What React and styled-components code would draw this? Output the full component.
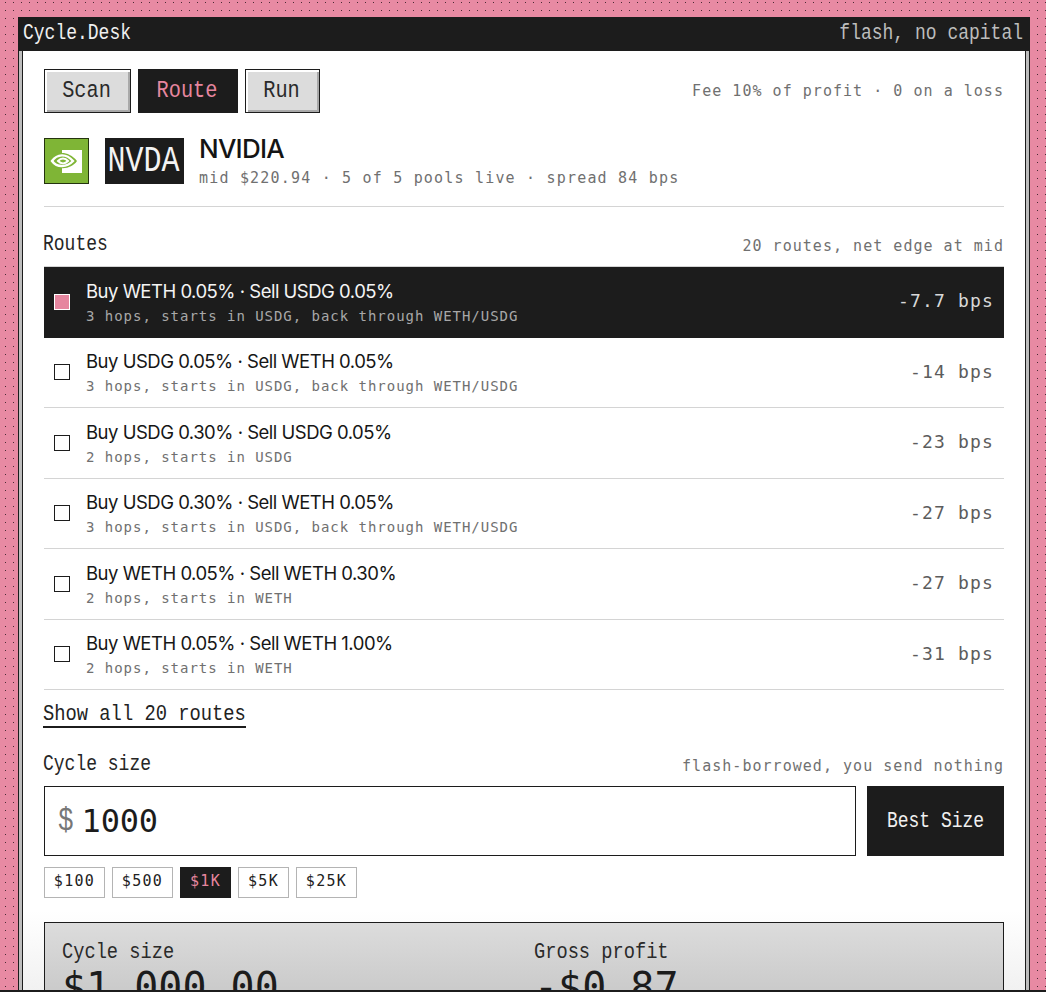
import React from "react";
import styled, { createGlobalStyle } from "styled-components";

const ink = "#1c1c1c";
const pink = "#e6869f";
const mono = '"DejaVu Sans Mono", monospace';
const pixel = '"Liberation Mono", monospace';
const sans = 'Inter, "Liberation Sans", sans-serif';

const Global = createGlobalStyle`
  html, body { margin: 0; padding: 0; height: 992px; overflow: hidden; }
  * { box-sizing: border-box; }
`;

const Page = styled.div`
  height: 992px;
  display: flex;
  flex-direction: column;
  overflow: hidden;
`;
const Stage = styled.div`
  flex: 1;
  min-height: 0;
  overflow: hidden;
  padding: 17px 16px 0 18px;
  background-color: #e88aa3;
  background-image: radial-gradient(circle at 5.5px 2.5px, #4a2a34 0.6px, transparent 1px);
  background-size: 8px 8px;
`;
const BottomEdge = styled.div`
  flex: none;
  height: 2px;
  background: ${ink};
`;
const Window = styled.div`
  height: 1000px;
  border: 1px solid ${ink};
  background: #bdbdbd;
  display: flex;
  flex-direction: column;
`;
const TitleBar = styled.div`
  flex: none;
  height: 34px;
  margin-top: -1px;
  background: ${ink};
  display: flex;
  align-items: center;
  justify-content: space-between;
  padding: 0 6px 2px 4px;
  font-family: ${pixel};
  font-size: 18px;
`;
const Tall = styled.span`
  display: inline-block;
  transform: scaleY(${(p) => p.$y || 1.22});
  transform-origin: 50% ${(p) => p.$o || 50}%;
`;
const TitleText = styled(Tall)`
  color: ${(p) => (p.$dim ? "#bdbdbd" : "#f0f0f0")};
`;
const Gutter = styled.div`
  flex: 1;
  min-height: 0;
  padding: 0 3px;
`;
const Body = styled.div`
  height: 100%;
  background: linear-gradient(#fff 0, #fff 860px, #f1f1f1 940px);
  border-left: 1px solid ${ink};
  border-right: 1px solid ${ink};
  padding: 18px 21px 0 21px;
`;
const Toolbar = styled.div`
  display: flex;
  align-items: center;
  gap: 7px;
`;
const Tab = styled.button`
  height: 44px;
  width: ${(p) => p.$w}px;
  padding: 0 2px 2px 0;
  border: 1px solid ${ink};
  background: ${(p) => (p.$active ? ink : "#dcdcdc")};
  color: ${(p) => (p.$active ? pink : "#2a2a2a")};
  box-shadow: ${(p) => (p.$active ? "none" : "inset 2px 2px 0 #fff, inset -2px -2px 0 #a9a9a9")};
  font-family: ${pixel};
  font-size: 20.3px;
`;
const Fee = styled.div`
  margin-left: auto;
  font-family: ${mono};
  font-size: 15px;
  letter-spacing: 1.03px;
  color: #707070;
`;
const Asset = styled.div`
  display: flex;
  align-items: flex-start;
  margin-top: 25px;
  padding-bottom: 22px;
  border-bottom: 1px solid #d4d4d4;
`;
const Logo = styled.div`
  width: 45px;
  height: 46px;
  flex: none;
  background: #7fb536;
  border: 1px solid #24330f;
  display: flex;
`;
const Ticker = styled.div`
  width: 79px;
  height: 46px;
  margin-left: 16px;
  padding-right: 2px;
  background: ${ink};
  color: #f3f3f3;
  display: flex;
  align-items: center;
  justify-content: center;
  font-family: ${pixel};
  font-size: 30px;
`;
const AssetInfo = styled.div`
  margin: -3px 0 0 15px;
  height: 49px;
  display: flex;
  flex-direction: column;
`;
const AssetName = styled.div`
  font-family: ${sans};
  font-size: 26px;
  line-height: 28px;
  font-weight: 500;
  letter-spacing: -0.75px;
  color: #141414;
`;
const AssetMeta = styled.div`
  margin-top: 6px;
  font-family: ${mono};
  font-size: 15px;
  line-height: 18px;
  letter-spacing: 1.19px;
  color: #707070;
`;
const SectionHead = styled.div`
  display: flex;
  align-items: baseline;
  justify-content: space-between;
  margin-top: ${(p) => p.$mt}px;
  height: ${(p) => p.$h}px;
`;
const SectionTitle = styled.div`
  font-family: ${pixel};
  font-size: 18px;
  line-height: 24px;
  color: #262626;
  margin-left: -1px;
`;
const SectionNote = styled.div`
  font-family: ${mono};
  font-size: 15px;
  letter-spacing: 1.03px;
  color: #707070;
`;
const Routes = styled.div`
  border-top: 1px solid #d4d4d4;
`;
const Row = styled.div`
  height: 70.5px;
  display: flex;
  align-items: center;
  padding: 0 10px;
  background: ${(p) => (p.$on ? ink : "transparent")};
  border-bottom: 1px solid ${(p) => (p.$on ? ink : "#d4d4d4")};
`;
const Check = styled.span`
  width: 16px;
  height: 16px;
  flex: none;
  border: 1px solid ${(p) => (p.$on ? "#fff" : ink)};
  background: ${(p) => (p.$on ? pink : "#fff")};
`;
const RouteText = styled.div`
  margin-left: 16px;
  flex: 1;
  display: flex;
  flex-direction: column;
`;
const RouteName = styled.div`
  font-family: ${sans};
  font-size: 18.5px;
  line-height: 24px;
  letter-spacing: -0.5px;
  color: ${(p) => (p.$on ? "#f4f4f4" : "#161616")};
`;
const RouteSub = styled.div`
  margin-top: 4px;
  font-family: ${mono};
  font-size: 14px;
  line-height: 18px;
  letter-spacing: 0.97px;
  color: ${(p) => (p.$on ? "#a8a8a8" : "#707070")};
`;
const Edge = styled.div`
  padding-bottom: 2px;
  font-family: ${mono};
  font-size: 18px;
  letter-spacing: 1.15px;
  color: ${(p) => (p.$on ? "#d8d8d8" : "#5c5c5c")};
`;
const ShowAll = styled.button`
  display: block;
  margin: 12px 0 0 -1px;
  padding: 1px 0 0;
  background: none;
  border: 0;
  border-bottom: 2px solid ${ink};
  font-family: ${pixel};
  font-size: 18.8px;
  line-height: 23px;
  color: #222;
`;
const SizeRow = styled.div`
  display: flex;
  gap: 11px;
  height: 70px;
`;
const SizeInput = styled.div`
  flex: 1;
  border: 1px solid ${ink};
  display: flex;
  align-items: center;
  padding-left: 13px;
  gap: 8px;
`;
const Dollar = styled.span`
  font-family: ${pixel};
  font-size: 26px;
  color: #777;
`;
const SizeValue = styled.span`
  font-family: ${mono};
  font-size: 32px;
  letter-spacing: -0.25px;
  color: ${ink};
`;
const BestSize = styled.button`
  width: 137px;
  border: 0;
  background: ${ink};
  color: #f0f0f0;
  font-family: ${pixel};
  font-size: 18px;
  padding: 0;
`;
const Chips = styled.div`
  display: flex;
  gap: 7px;
  margin-top: 11px;
`;
const Chip = styled.button`
  height: 31px;
  width: ${(p) => p.$w}px;
  padding: 0 0 4px;
  border: 1px solid ${(p) => (p.$on ? ink : "#b4b4b4")};
  background: ${(p) => (p.$on ? ink : "#fff")};
  color: ${(p) => (p.$on ? pink : "#222")};
  font-family: ${mono};
  font-size: 15px;
  letter-spacing: 1.3px;
`;
const Summary = styled.div`
  margin-top: 24px;
  height: 200px;
  border: 1px solid ${ink};
  background: linear-gradient(#dcdcdc 0, #a8a8a8 200px);
  display: grid;
  grid-template-columns: 472px 1fr;
  padding: 17px 17px;
`;
const StatLabel = styled.div`
  font-family: ${pixel};
  font-size: 18.7px;
  line-height: 24px;
  color: #2a2a2a;
`;
const StatValue = styled.div`
  font-family: ${mono};
  font-size: 40px;
  line-height: 46px;
  color: ${ink};
`;

function NvidiaMark() {
  return (
    <svg width="43" height="44" viewBox="0 0 43 44" fill="none" aria-hidden="true">
      <rect x="17" y="11" width="20" height="23" fill="#fff" />
      <path d="M3 22C9 12 23 11 32 22C26 31 11 32 3 22Z" fill="#7fb536" />
      <path d="M7 22C12 15 21 14 28 22C22 28.5 12 29 7 22Z" stroke="#fff" strokeWidth="2.4" />
      <path d="M13 22C16 18.5 20 18.5 23 22C20 25 16 25 13 22Z" stroke="#fff" strokeWidth="2" />
    </svg>
  );
}

const routes = [
  ["Buy WETH 0.05% · Sell USDG 0.05%", "3 hops, starts in USDG, back through WETH/USDG", "-7.7 bps"],
  ["Buy USDG 0.05% · Sell WETH 0.05%", "3 hops, starts in USDG, back through WETH/USDG", "-14 bps"],
  ["Buy USDG 0.30% · Sell USDG 0.05%", "2 hops, starts in USDG", "-23 bps"],
  ["Buy USDG 0.30% · Sell WETH 0.05%", "3 hops, starts in USDG, back through WETH/USDG", "-27 bps"],
  ["Buy WETH 0.05% · Sell WETH 0.30%", "2 hops, starts in WETH", "-27 bps"],
  ["Buy WETH 0.05% · Sell WETH 1.00%", "2 hops, starts in WETH", "-31 bps"],
];
const chips = [["$100", 61], ["$500", 61], ["$1K", 51, true], ["$5K", 51], ["$25K", 61]];

export default function App() {
  return (
    <Page>
      <Global />
      <Stage>
        <Window>
          <TitleBar>
            <TitleText>Cycle.Desk</TitleText>
            <TitleText $dim>flash, no capital</TitleText>
          </TitleBar>
          <Gutter>
            <Body>
              <Toolbar>
                <Tab $w={87}><Tall>Scan</Tall></Tab>
                <Tab $w={100} $active><Tall>Route</Tall></Tab>
                <Tab $w={75}><Tall>Run</Tall></Tab>
                <Fee>Fee 10% of profit · 0 on a loss</Fee>
              </Toolbar>
              <Asset>
                <Logo><NvidiaMark /></Logo>
                <Ticker><Tall>NVDA</Tall></Ticker>
                <AssetInfo>
                  <AssetName>NVIDIA</AssetName>
                  <AssetMeta>mid $220.94 · 5 of 5 pools live · spread 84 bps</AssetMeta>
                </AssetInfo>
              </Asset>
              <SectionHead $mt={27} $h={32}>
                <SectionTitle><Tall $o={90}>Routes</Tall></SectionTitle>
                <SectionNote>20 routes, net edge at mid</SectionNote>
              </SectionHead>
              <Routes>
                {routes.map((r, i) => (
                  <Row key={i} $on={i === 0}>
                    <Check $on={i === 0} />
                    <RouteText>
                      <RouteName $on={i === 0}>{r[0]}</RouteName>
                      <RouteSub $on={i === 0}>{r[1]}</RouteSub>
                    </RouteText>
                    <Edge $on={i === 0}>{r[2]}</Edge>
                  </Row>
                ))}
              </Routes>
              <ShowAll><Tall>Show all 20 routes</Tall></ShowAll>
              <SectionHead $mt={26} $h={32}>
                <SectionTitle><Tall $o={90}>Cycle size</Tall></SectionTitle>
                <SectionNote>flash-borrowed, you send nothing</SectionNote>
              </SectionHead>
              <SizeRow>
                <SizeInput>
                  <Dollar><Tall $y={1.3}>$</Tall></Dollar>
                  <SizeValue>1000</SizeValue>
                </SizeInput>
                <BestSize><Tall>Best Size</Tall></BestSize>
              </SizeRow>
              <Chips>
                {chips.map(([t, w, on]) => (
                  <Chip key={t} $w={w} $on={on}>{t}</Chip>
                ))}
              </Chips>
              <Summary>
                <div>
                  <StatLabel><Tall>Cycle size</Tall></StatLabel>
                  <StatValue>$1,000.00</StatValue>
                </div>
                <div>
                  <StatLabel><Tall>Gross profit</Tall></StatLabel>
                  <StatValue>-$0.87</StatValue>
                </div>
              </Summary>
            </Body>
          </Gutter>
        </Window>
      </Stage>
      <BottomEdge />
    </Page>
  );
}
